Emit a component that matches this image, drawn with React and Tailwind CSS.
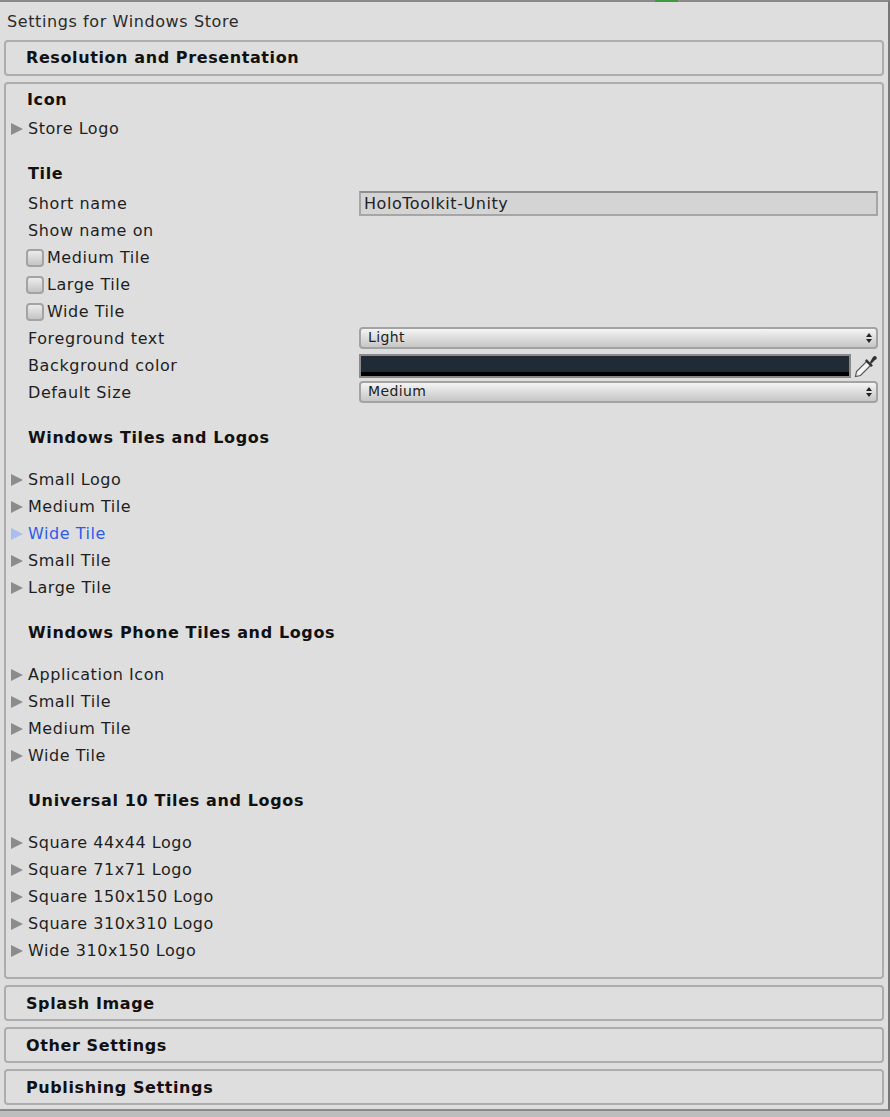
import React from "react";

const font = "font-['DejaVu_Sans',sans-serif]";

function Arrow({ active }) {
  return (
    <svg width="13" height="14" viewBox="0 0 13 14" className="shrink-0">
      <path d="M0 1 L12 7 L0 13 Z" fill={active ? "#a9bdf0" : "#8c8c8c"} />
    </svg>
  );
}

function Foldout({ label, active, className = "" }) {
  return (
    <div className={`flex h-[27px] items-center pl-[5px] gap-[4px] text-[16px] tracking-[0.55px] ${active ? "text-[#2f5be8]" : "text-[#1e1e1e]"} ${className}`}>
      <Arrow active={active} />
      <span>{label}</span>
    </div>
  );
}

function Heading({ children, className = "pl-[22px]" }) {
  return <div className={`flex h-[27px] items-center text-[16px] font-bold tracking-[0.63px] text-[#111] ${className}`}>{children}</div>;
}

function Label({ children }) {
  return <div className="w-[353px] shrink-0 pl-[22px] text-[16px] tracking-[0.6px] text-[#1e1e1e]">{children}</div>;
}

function Check({ label }) {
  return (
    <div className="flex h-[27px] items-center pl-[20px] gap-[3px] text-[16px] tracking-[0.55px] text-[#1e1e1e]">
      <div className="h-[18px] w-[18px] rounded-[4px] border-2 border-[#a3a3a3] bg-gradient-to-b from-[#ececec] to-[#c4c4c4]" />
      <span>{label}</span>
    </div>
  );
}

function Dropdown({ value }) {
  return (
    <div className="mb-[2px] flex h-[22px] w-[519px] items-center justify-between rounded-[4px] border-2 border-[#a3a3a3] bg-gradient-to-b from-[#f4f4f4] to-[#c6c6c6] pl-[7px] pr-[4px] text-[14px] tracking-[0.4px] text-[#222]">
      <span>{value}</span>
      <svg width="6" height="10" viewBox="0 0 6 10">
        <path d="M3 0 L6 4 L0 4 Z M3 10 L6 6 L0 6 Z" fill="#222" />
      </svg>
    </div>
  );
}

function Collapsed({ title, className = "" }) {
  return (
    <div className={`flex h-[36px] items-center rounded-[4px] border-2 border-[#adadad] pl-[20px] text-[16px] font-bold tracking-[0.6px] text-[#111] ${className}`}>
      {title}
    </div>
  );
}

export default function App() {
  return (
    <div className={`relative h-[1117px] w-[890px] overflow-hidden bg-[#bdbdbd] ${font}`}>
      <div className="h-[1111px] w-[890px] border-t-2 border-r-2 border-b-2 border-[#8a8a8a] border-r-[#777] bg-[#dedede] pl-[4px] pr-[4px]">
        <div className="flex h-[38px] items-center pl-[3px] pt-[1px] text-[16px] tracking-[0.6px] text-[#2a2a2a]">Settings for Windows Store</div>

        <Collapsed title="Resolution and Presentation" />

        <div className="mt-[6px] h-[897px] rounded-[4px] border-2 border-[#adadad] pt-[2px]">
          <Heading className="pl-[21px]">Icon</Heading>
          <Foldout label="Store Logo" className="mt-[2px]" />

          <Heading className="mt-[18px] pl-[22px]">Tile</Heading>
          <div className="mt-[3px] flex h-[27px] items-center">
            <Label>Short name</Label>
            <div className="flex h-[25px] w-[519px] items-center border-2 border-[#a6a6a6] border-t-[#8e8e8e] bg-[#d4d4d4] pl-[3px] text-[16px] tracking-[0.55px] text-[#222]">HoloToolkit-Unity</div>
          </div>
          <div className="flex h-[27px] items-center"><Label>Show name on</Label></div>
          <Check label="Medium Tile" />
          <Check label="Large Tile" />
          <Check label="Wide Tile" />
          <div className="flex h-[27px] items-center">
            <Label>Foreground text</Label>
            <Dropdown value="Light" />
          </div>
          <div className="flex h-[27px] items-center">
            <Label>Background color</Label>
            <div className="flex h-[24px] w-[492px] flex-col border-2 border-[#8a8a8a]">
              <div className="flex-1 bg-[#212b36]" />
              <div className="h-[4px] bg-black" />
            </div>
            <svg width="24" height="24" viewBox="0 0 24 24" className="ml-[3px]">
              <path d="M1.5 22.5 L2.5 17.5 L13 7 L17 11 L6.5 21.5 Z" fill="#f4f4f4" stroke="#555" strokeWidth="1.2" />
              <path d="M12.5 5 L19 11.5 L17 13 L11 7 Z" fill="#333" />
              <path d="M16 8 L19 3 Q21 1 22.5 3 Q23.5 5 21 6 L17 10 Z" fill="#333" />
            </svg>
          </div>
          <div className="flex h-[27px] items-center">
            <Label>Default Size</Label>
            <Dropdown value="Medium" />
          </div>

          <Heading className="mt-[18px] pl-[22px]">Windows Tiles and Logos</Heading>
          <Foldout label="Small Logo" className="mt-[15px]" />
          <Foldout label="Medium Tile" />
          <Foldout label="Wide Tile" active />
          <Foldout label="Small Tile" />
          <Foldout label="Large Tile" />

          <Heading className="mt-[18px] pl-[22px]">Windows Phone Tiles and Logos</Heading>
          <Foldout label="Application Icon" className="mt-[15px]" />
          <Foldout label="Small Tile" />
          <Foldout label="Medium Tile" />
          <Foldout label="Wide Tile" />

          <Heading className="mt-[18px] pl-[22px]">Universal 10 Tiles and Logos</Heading>
          <Foldout label="Square 44x44 Logo" className="mt-[15px]" />
          <Foldout label="Square 71x71 Logo" />
          <Foldout label="Square 150x150 Logo" />
          <Foldout label="Square 310x310 Logo" />
          <Foldout label="Wide 310x150 Logo" />
        </div>

        <Collapsed title="Splash Image" className="mt-[6px] pt-[1px]" />
        <Collapsed title="Other Settings" className="mt-[6px] pt-[1px]" />
        <Collapsed title="Publishing Settings" className="mt-[6px] pt-[1px]" />
      </div>
      <div className="absolute left-[655px] top-0 h-[2px] w-[23px] bg-[#3f9a3f]" />
    </div>
  );
}
